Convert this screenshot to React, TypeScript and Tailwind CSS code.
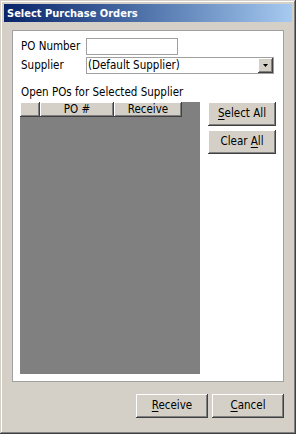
import React from 'react';

const raised =
  'bg-[#d4d0c8] shadow-[inset_-1px_-1px_#404040,inset_1px_1px_#ffffff,inset_-2px_-2px_#808080,inset_2px_2px_#d4d0c8]';

function Btn({ pre, u, post, className = '' }: { pre: string; u: string; post: string; className?: string }) {
  return (
    <button className={`${raised} flex items-center justify-center text-[11.5px] text-black ${className}`}>
      <span className="whitespace-pre">
        {pre}
        <span className="underline underline-offset-2">{u}</span>
        {post}
      </span>
    </button>
  );
}

export default function App() {
  return (
    <div
      className="w-[296px] h-[434px] bg-[#d4d0c8] flex flex-col p-[4px] shadow-[inset_-1px_-1px_#404040,inset_1px_1px_#d4d0c8,inset_-2px_-2px_#808080,inset_2px_2px_#ffffff]"
      style={{ fontFamily: '"DejaVu Sans Condensed", "DejaVu Sans", Tahoma, sans-serif' }}
    >
      {/* title bar */}
      <div className="h-[18px] flex items-center pl-[3px] bg-gradient-to-r from-[#0a246a] to-[#a6caf0]">
        <span className="text-white font-bold text-[11px] leading-none">Select Purchase Orders</span>
      </div>

      {/* body */}
      <div className="flex-1 flex flex-col px-[8px] pt-[8px]">
        <div className="h-[352px] bg-white border border-[#a0a0a0] flex flex-col px-[7px] pt-[7px] text-[11.5px] text-black">
          <div className="flex items-center h-[17px]">
            <span className="w-[66px] pl-[1px]">PO Number</span>
            <div className="w-[92px] h-[17px] bg-white border border-[#a0a0a0]" />
          </div>
          <div className="flex items-center h-[17px] mt-[2px]">
            <span className="w-[66px] pl-[1px]">Supplier</span>
            <div className="w-[188px] h-[17px] bg-white border border-[#a0a0a0] flex items-center justify-between">
              <span className="pl-[1px] leading-none">(Default Supplier)</span>
              <div className={`${raised} w-[15px] h-[15px] flex items-center justify-center`}>
                <svg width="5" height="3" viewBox="0 0 5 3">
                  <polygon points="0,0 5,0 2.5,3" fill="#000" />
                </svg>
              </div>
            </div>
          </div>
          <div className="mt-[12px] h-[13px] leading-[13px] pl-[1px]">Open POs for Selected Supplier</div>
          <div className="flex mt-[3px] gap-[8px]">
            <div className="w-[180px] h-[272px] bg-[#808080] flex flex-col">
              <div className="flex h-[15px]">
                <div className={`${raised} w-[20px]`} />
                <div className={`${raised} w-[74px] flex items-center justify-center leading-none`}>PO #</div>
                <div className={`${raised} w-[68px] flex items-center justify-center leading-none`}>Receive</div>
              </div>
            </div>
            <div className="flex flex-col gap-[4px]">
              <Btn pre="" u="S" post="elect All" className="w-[68px] h-[24px]" />
              <Btn pre="Clear " u="A" post="ll" className="w-[68px] h-[24px]" />
            </div>
          </div>
        </div>
        <div className="flex justify-end gap-[4px] mt-[12px]">
          <Btn pre="" u="R" post="eceive" className="w-[72px] h-[24px]" />
          <Btn pre="" u="C" post="ancel" className="w-[72px] h-[24px]" />
        </div>
      </div>
    </div>
  );
}
